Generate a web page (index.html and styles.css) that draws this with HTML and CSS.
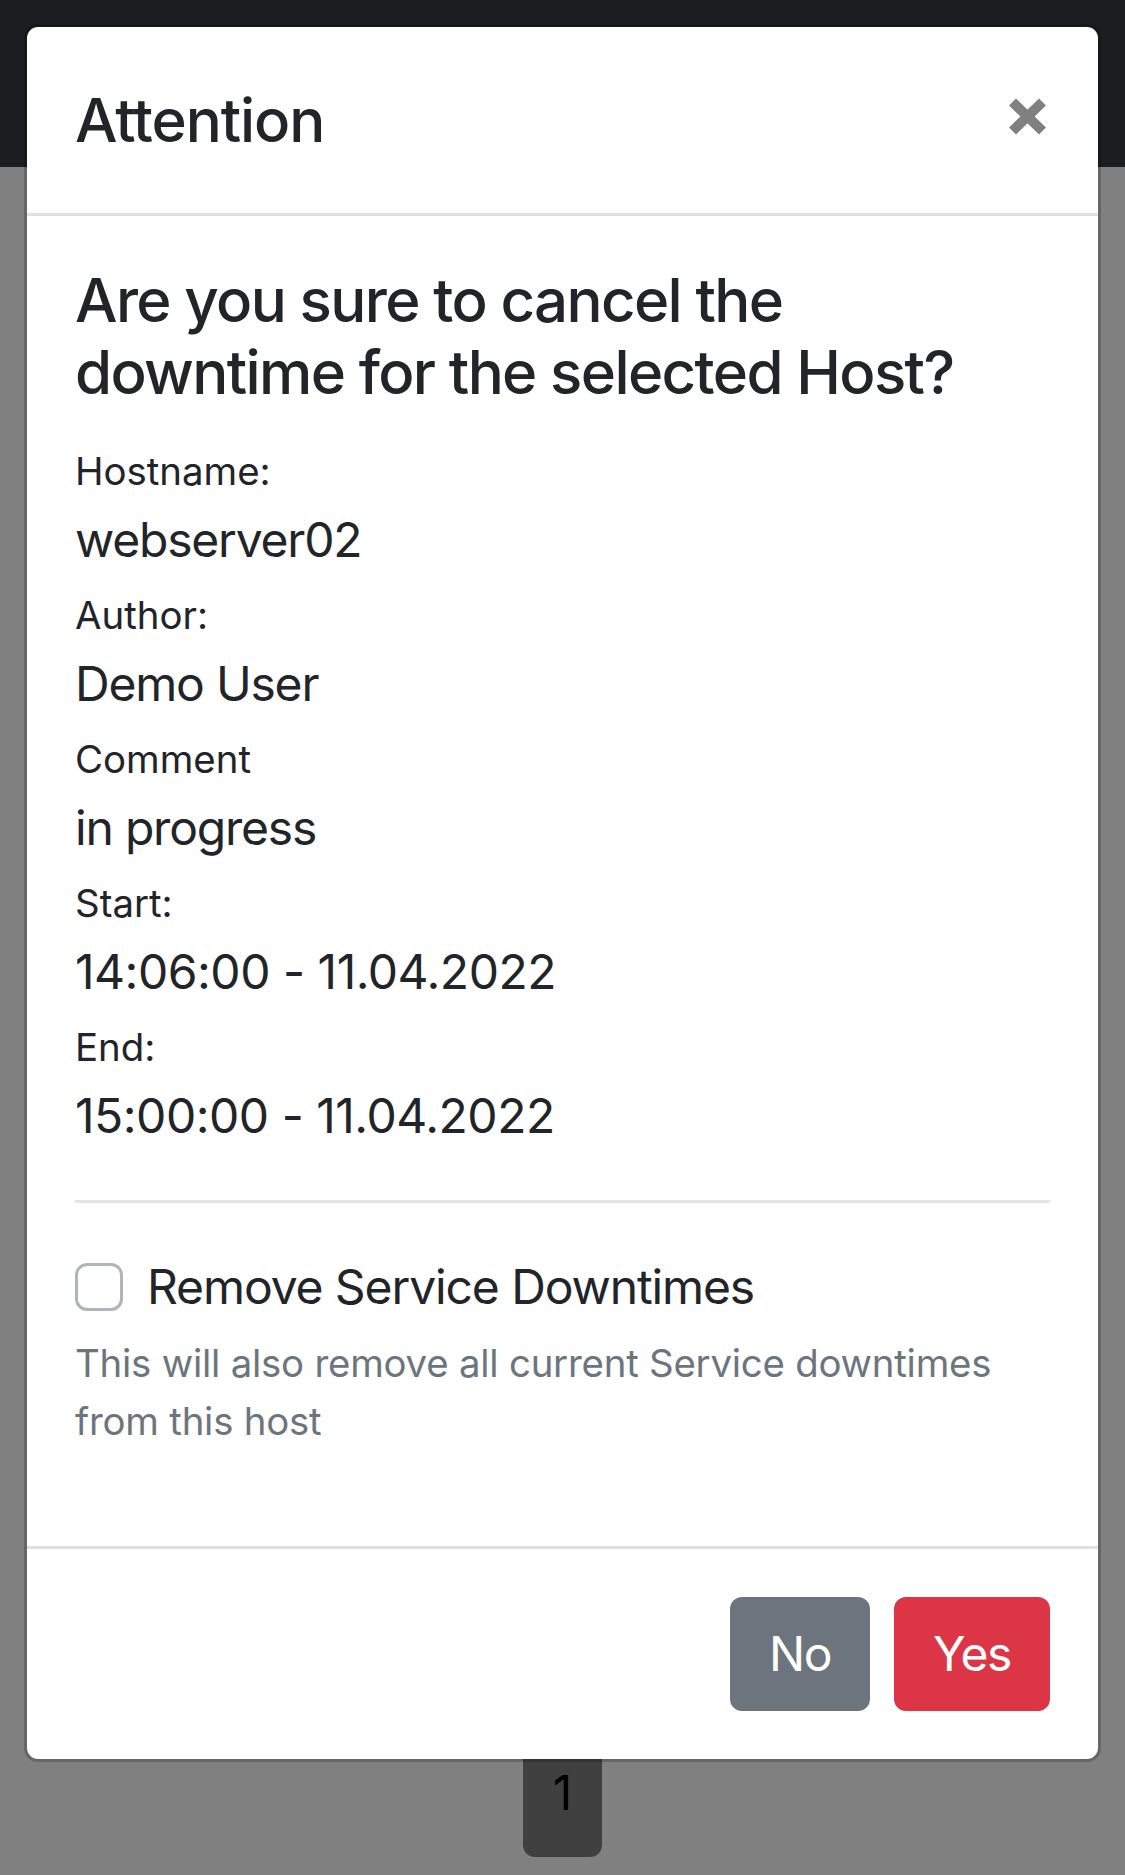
FILE: index.html
```html
<!DOCTYPE html>
<html lang="en">
<head>
<meta charset="utf-8">
<title>Attention</title>
<link rel="stylesheet" href="styles.css">
</head>
<body>
<div class="page">
  <div class="navbar"></div>
  <div class="main">
    <div class="page-item">1</div>
  </div>
</div>

<div class="modal" role="dialog">
  <div class="modal-header">
    <h5 class="modal-title">Attention</h5>
    <button class="close" type="button" aria-label="Close">
      <svg width="39" height="37" viewBox="0 0 39 37" aria-hidden="true">
        <path d="M4.5 4 L34.5 33 M34.5 4 L4.5 33" stroke="#808080" stroke-width="10" fill="none"/>
      </svg>
    </button>
  </div>
  <div class="modal-body">
    <h5 class="question">Are you sure to cancel the downtime for the selected Host?</h5>
    <div class="field"><small class="label">Hostname:</small></div>
    <div class="field">webserver02</div>
    <div class="field"><small class="label">Author:</small></div>
    <div class="field">Demo User</div>
    <div class="field"><small class="label">Comment</small></div>
    <div class="field">in progress</div>
    <div class="field"><small class="label">Start:</small></div>
    <div class="field date">14:06:00 - 11.04.2022</div>
    <div class="field"><small class="label">End:</small></div>
    <div class="field date">15:00:00 - 11.04.2022</div>
    <hr class="divider">
    <div class="form-group">
      <div class="check">
        <span class="check-box"></span>
        <span class="check-label">Remove Service Downtimes</span>
      </div>
      <small class="help">This will also remove all current Service downtimes from this host</small>
    </div>
  </div>
  <div class="modal-footer">
    <button class="btn btn-secondary" type="button">No</button>
    <button class="btn btn-danger" type="button">Yes</button>
  </div>
</div>
</body>
</html>
```
FILE: styles.css
```css
* { box-sizing: border-box; }

body {
  margin: 0;
  font-family: Inter, "Noto Sans", "Liberation Sans", sans-serif;
  background: #808080;
  color: #212529;
}

.page {
  height: 1875px;
  display: flex;
  flex-direction: column;
}

.navbar {
  height: 167px;
  background: #1b1e21;
}

.main {
  flex: 1;
  display: flex;
  justify-content: center;
  align-items: flex-end;
  padding-bottom: 18px;
}

.page-item {
  width: 79px;
  height: 120px;
  padding-top: 20px;
  background: #404040;
  border-radius: 0 0 12px 12px;
  color: #000;
  font-size: 48px;
  line-height: 72px;
  text-align: center;
}

.modal {
  position: absolute;
  top: 24px;
  left: 24px;
  right: 24px;
  background: #fff;
  background-clip: padding-box;
  border: 3px solid rgba(0, 0, 0, 0.2);
  border-radius: 14px;
}

.modal-header {
  display: flex;
  align-items: flex-start;
  padding: 48px;
  border-bottom: 3px solid #dee2e6;
}

.modal-title {
  margin: 0;
  font-size: 60px;
  font-weight: 500;
  line-height: 1.5;
  letter-spacing: -0.018em;
}

.close {
  margin: 23px 3px 0 auto;
  padding: 0;
  border: 0;
  background: none;
  display: flex;
  cursor: pointer;
}

.modal-body {
  padding: 48px;
}

.question {
  margin: 0 0 24px;
  font-size: 60px;
  font-weight: 500;
  line-height: 1.2;
  letter-spacing: -0.027em;
}

.field {
  font-size: 48px;
  line-height: 72px;
  letter-spacing: -0.025em;
}

.field.date {
  letter-spacing: -0.01em;
}

.label {
  font-size: 80%;
  line-height: 1;
  letter-spacing: 0;
}

.divider {
  margin: 48px 0;
  border: 0;
  border-top: 3px solid rgba(0, 0, 0, 0.1);
}

.form-group {
  margin-bottom: 48px;
}

.check {
  position: relative;
  padding-left: 72px;
  min-height: 72px;
  font-size: 48px;
  line-height: 72px;
  letter-spacing: -0.023em;
}

.check-box {
  position: absolute;
  left: 0;
  top: 12px;
  width: 48px;
  height: 48px;
  border: 3px solid #adb5bd;
  border-radius: 12px;
  background: #fff;
}

.help {
  display: block;
  margin-top: 12px;
  font-size: 38.4px;
  line-height: 1.5;
  color: #6c757d;
  letter-spacing: -0.006em;
}

.modal-footer {
  display: flex;
  justify-content: flex-end;
  align-items: center;
  padding: 36px;
  border-top: 3px solid #dee2e6;
}

.btn {
  margin: 12px;
  padding: 18px 36px;
  font-family: inherit;
  font-size: 48px;
  line-height: 72px;
  letter-spacing: -0.03em;
  color: #fff;
  border: 3px solid transparent;
  border-radius: 12px;
}

.btn-secondary {
  background: #6c757d;
  border-color: #6c757d;
}

.btn-danger {
  background: #dc3545;
  border-color: #dc3545;
}
```
